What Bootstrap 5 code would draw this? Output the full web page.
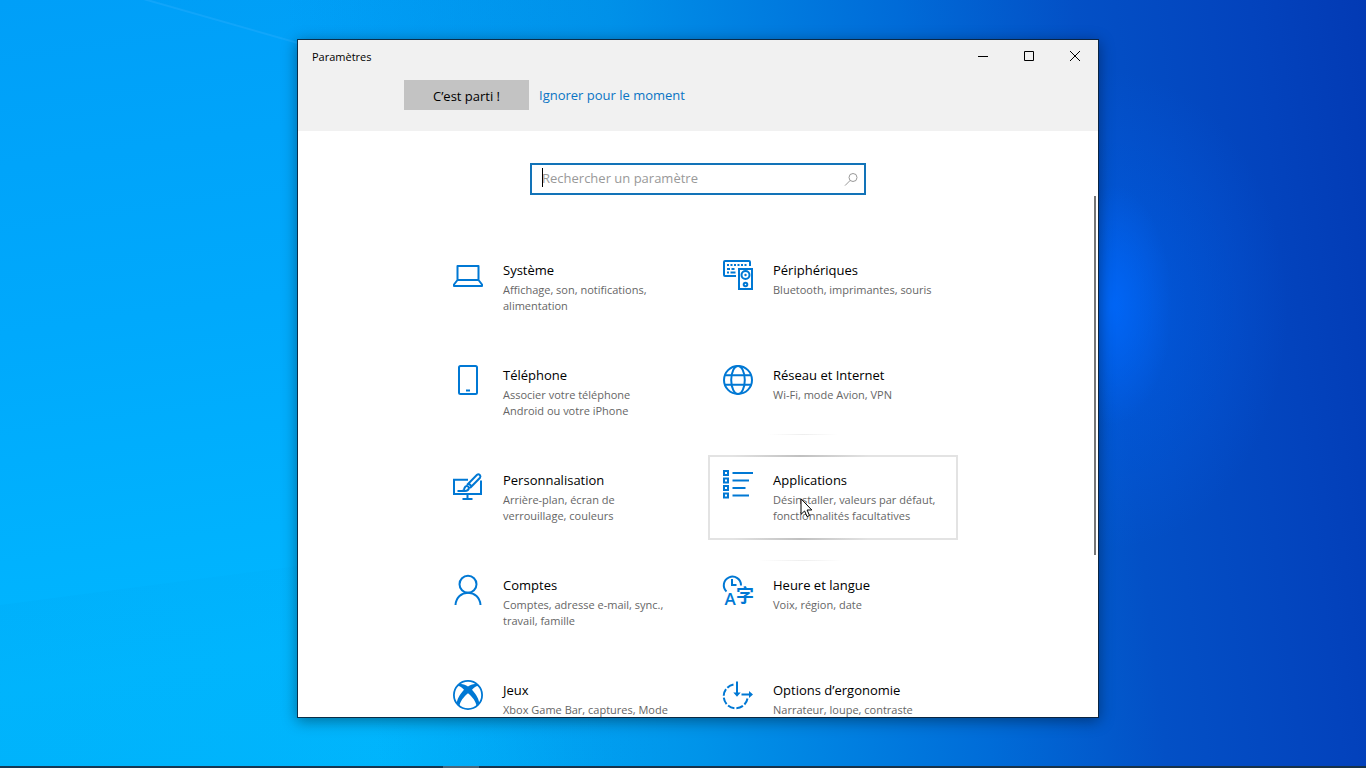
<!DOCTYPE html>
<html lang="fr">
<head>
<meta charset="utf-8">
<meta name="viewport" content="width=device-width, initial-scale=1">
<title>Paramètres</title>
<link href="https://cdn.jsdelivr.net/npm/bootstrap@5.3.0/dist/css/bootstrap.min.css" rel="stylesheet">
<style>
  :root { --accent: #0078d4; --muted-text: #666; }
  body { font-family: "Open Sans", "Noto Sans", "Noto Sans CJK SC", sans-serif; color: #000; font-size: 13px; line-height: 20px; }
  .desktop {
    background:
      radial-gradient(ellipse 60px 120px at 1112px 305px, rgba(0,106,255,.75), rgba(0,104,255,0)),
      radial-gradient(ellipse 180px 240px at 1108px 310px, rgba(0,98,240,.55), rgba(0,90,230,0)),
      linear-gradient(83deg, rgba(0,150,240,0) 26%, rgba(0,142,230,.85) 48%, rgba(0,104,214,.95) 68%, #0350c6 80%, #0343bd 92%, #033ab4 100%),
      linear-gradient(172deg, #009ff8 0%, #00a9fc 35%, #00b7ff 72%, #00b4fb 100%);
  }
  .light-rays { inset: 0; pointer-events: none; }
  .stage { padding: 39px 267px 50px 297px; min-height: 0; }
  .app-window { background: #fff; border: 1px solid rgba(10,30,50,.85); box-shadow: 0 3px 14px rgba(0,0,0,.4); min-height: 0; background-clip: padding-box; }
  .app-head { background: #f1f1f1; }
  .app-title { font-size: 11px; line-height: 16px; padding: 9px 14px 7px; }
  .win-btn { width: 46px; height: 32px; }
  .setup-bar { padding: 8px 106px 21px; gap: 10px; }
  .setup-btn { background: #c3c3c3; width: 125px; height: 30px; padding: 2px 0 0; }
  .setup-link { color: #0a74c4; }
  .scroll-zone { overflow: hidden; min-height: 0; padding-top: 32px; }
  .search-wrap { width: 336px; max-width: 90%; }
  .search-box { height: 32px; border: 2px solid #1273b8; padding: 0 34px 2px 10px; font-size: 13px; }
  .search-box::placeholder { color: #999; opacity: 1; }
  .search-icon { right: 7px; top: 9px; }
  .caret-line { left: 12px; top: 5px; width: 1px; height: 19px; background: #000; }
  .category-grid { max-width: 520px; margin-top: 50px; }
  .category-grid > .row { --bs-gutter-x: 20px; --bs-gutter-y: 20px; }
  .tile { height: 85px; padding: 15px 4px 0 15px; gap: 20px; }
  .tile svg.tile-icon { width: 30px; height: 30px; overflow: visible; fill: none; stroke: var(--accent); stroke-width: 2; }
  .tile-title { line-height: 21px; margin-bottom: 1px; }
  .tile-desc { font-size: 11px; line-height: 16px; color: var(--muted-text); }
  .tile-hover { box-shadow: inset 0 0 0 2px #e3e3e3; }
  .tile-hover::before, .tile-hover::after { content: ""; position: absolute; left: 25px; width: 135px; height: 2px; background: linear-gradient(90deg, transparent, #c0c0c0, transparent); }
  .tile-hover::before { top: 0; }
  .tile-hover::after { bottom: 0; }
  .tile-near-below { background: linear-gradient(90deg, transparent 60px, #eee 95px, transparent 130px) bottom / 100% 1px no-repeat; }
  .tile-near-above { background: linear-gradient(90deg, transparent 50px, #eee 95px, transparent 135px) top / 100% 1px no-repeat; }
  .pointer { left: 92px; top: 43px; }
  .scroll-thumb { right: 2px; top: 23%; width: 2px; height: 53%; background: #767676; }
  .taskbar-edge { height: 2px; margin-top: -2px; background: #17324a; }
  .taskbar-edge span { margin-left: 443px; width: 36px; height: 2px; background: #4a6478; }
  @media (max-width: 1100px) { .stage { padding: 24px; } .setup-bar { padding-left: 24px; padding-right: 24px; } }
</style>
</head>
<body>
<div class="desktop vh-100 d-flex flex-column overflow-hidden position-relative">
  <svg class="light-rays position-absolute w-100 h-100" aria-hidden="true">
    <defs><linearGradient id="ray"><stop offset="0" stop-color="#0090dc" stop-opacity=".08"/><stop offset="1" stop-color="#0090dc" stop-opacity="0"/></linearGradient></defs>
    <path d="M140 -2 L298 43 L700 150 L700 -2Z" fill="url(#ray)"/>
    <path d="M140 -2 L298 43" stroke="#38b4ff" stroke-opacity=".3" stroke-width="2" fill="none"/>
    <path d="M0 605 L298 566 L700 514 L700 768 L0 768Z" fill="url(#ray)"/>
  </svg>
  <main class="stage flex-fill d-flex position-relative">
    <section class="app-window position-relative w-100 d-flex flex-column" aria-label="Paramètres">
      <header class="app-head">
        <div class="d-flex justify-content-between">
          <div class="app-title">Paramètres</div>
          <div class="d-flex">
            <button type="button" class="win-btn btn p-0 border-0 rounded-0 d-flex align-items-center justify-content-center" aria-label="Réduire"><svg width="10" height="10"><path d="M0 5.5H10" stroke="#000"/></svg></button>
            <button type="button" class="win-btn btn p-0 border-0 rounded-0 d-flex align-items-center justify-content-center" aria-label="Agrandir"><svg width="10" height="10"><path d="M.5 .5H9.5V9.5H.5Z" stroke="#000" fill="none"/></svg></button>
            <button type="button" class="win-btn btn p-0 border-0 rounded-0 d-flex align-items-center justify-content-center" aria-label="Fermer"><svg width="10" height="10"><path d="M0 0L10 10M10 0L0 10" stroke="#000"/></svg></button>
          </div>
        </div>
        <div class="setup-bar d-flex align-items-center">
          <button type="button" class="setup-btn border-0">C’est parti !</button>
          <a href="#" class="setup-link text-decoration-none">Ignorer pour le moment</a>
        </div>
      </header>

      <div class="scroll-zone flex-fill">
        <form class="search-wrap mx-auto position-relative" role="search">
          <input type="text" class="search-box form-control rounded-0 shadow-none" aria-label="Rechercher un paramètre" placeholder="Rechercher un paramètre">
          <span class="caret-line position-absolute"></span>
          <svg class="search-icon position-absolute" width="15" height="15" fill="none" stroke="#999" aria-hidden="true"><circle cx="9" cy="5.5" r="4"/><path d="M6.2 8.4L1 13.6"/></svg>
        </form>

        <div class="category-grid mx-auto">
          <div class="row row-cols-2">
            <div class="col"><a href="#" class="tile d-flex text-reset text-decoration-none">
              <svg class="tile-icon flex-shrink-0" viewBox="0 0 30 30"><path d="M4.500 6H25.500V20H4.500ZM4.500 20L1 24.500V26H29V24.500L25.500 20" stroke-linejoin="round"/></svg>
              <div><div class="tile-title">Système</div><div class="tile-desc">Affichage, son, notifications,<br>alimentation</div></div></a></div>

            <div class="col"><a href="#" class="tile d-flex text-reset text-decoration-none">
              <svg class="tile-icon flex-shrink-0" viewBox="0 0 30 30"><path d="M13 16H2Q1 16 1 15V2Q1 1 2 1H26Q27 1 27 2V6"/><path d="M4 5H25" stroke-dasharray="2 1.500"/><path d="M4 9H13" stroke-dasharray="3 1.500"/><path d="M4 12.500H13" stroke-dasharray="2 1.500 5"/><path d="M16 9H29V29H16Z"/><circle cx="22.500" cy="15" r="4"/><circle cx="22.500" cy="15" r="1.200" fill="#0078d4" stroke="none"/><circle cx="22.500" cy="24.500" r="1.800"/></svg>
              <div><div class="tile-title">Périphériques</div><div class="tile-desc">Bluetooth, imprimantes, souris</div></div></a></div>

            <div class="col"><a href="#" class="tile d-flex text-reset text-decoration-none">
              <svg class="tile-icon flex-shrink-0" viewBox="0 0 30 30"><rect x="6" y="1" width="18" height="28" rx="1.500"/><path d="M13 25.500H17"/></svg>
              <div><div class="tile-title">Téléphone</div><div class="tile-desc">Associer votre téléphone<br>Android ou votre iPhone</div></div></a></div>

            <div class="col"><a href="#" class="tile tile-near-below d-flex text-reset text-decoration-none">
              <svg class="tile-icon flex-shrink-0" viewBox="0 0 30 30"><circle cx="15" cy="15" r="14"/><ellipse cx="15" cy="15" rx="6.800" ry="14"/><path d="M2 10.300H28M2 19.700H28"/></svg>
              <div><div class="tile-title">Réseau et Internet</div><div class="tile-desc">Wi-Fi, mode Avion, VPN</div></div></a></div>

            <div class="col"><a href="#" class="tile d-flex text-reset text-decoration-none">
              <svg class="tile-icon flex-shrink-0" viewBox="0 0 30 30"><path d="M15 9.700H1V24H28V10.500M14.500 24V28.500M9.500 29H19.500"/><path d="M4.500 21H12Q15.500 21 16 17.500Q14.500 15.300 12.500 16.500Q11.500 17.500 11 19.500Q10.500 21 9 21"/><path d="M14 15L24 4.800Q25.500 3.800 26.800 5Q28 6.300 27 7.800L17 18M15.800 13.500L18.500 16.200"/></svg>
              <div><div class="tile-title">Personnalisation</div><div class="tile-desc">Arrière-plan, écran de<br>verrouillage, couleurs</div></div></a></div>

            <div class="col"><a href="#" class="tile tile-hover position-relative d-flex text-reset text-decoration-none">
              <svg class="tile-icon flex-shrink-0" viewBox="0 0 30 30"><path d="M1 1H5V5H1ZM1 8.500H5V12.500H1ZM1 16H5V20H1ZM1 23.500H5V27.500H1ZM9.500 3H30M9.500 10.500H26M9.500 18H22.500M9.500 25.500H26"/></svg>
              <div><div class="tile-title">Applications</div><div class="tile-desc">Désinstaller, valeurs par défaut,<br>fonctionnalités facultatives</div></div>
              <svg class="pointer position-absolute" width="13" height="20" aria-hidden="true"><path d="M1 .800V16.300L4.600 13L7 18.600L9.500 17.500L7.100 12H11.800Z" fill="#fff" stroke="#000"/></svg></a></div>

            <div class="col"><a href="#" class="tile d-flex text-reset text-decoration-none">
              <svg class="tile-icon flex-shrink-0" viewBox="0 0 30 30"><circle cx="15" cy="9.300" r="8.500"/><path d="M2.500 30C3 22.500 8.500 17.800 15 17.800S27 22.500 27.500 30"/></svg>
              <div><div class="tile-title">Comptes</div><div class="tile-desc">Comptes, adresse e-mail, sync.,<br>travail, famille</div></div></a></div>

            <div class="col"><a href="#" class="tile tile-near-above d-flex text-reset text-decoration-none">
              <svg class="tile-icon flex-shrink-0" viewBox="0 0 30 30"><path d="M3.500 16.500A8.600 8.600 0 1 1 18 10.500M9 4V10H13.500"/><g fill="#0078d4" stroke="none"><text x="1.500" y="30" font-family="Open Sans, sans-serif" font-size="17" font-weight="600">A</text><text x="13" y="27" font-family="Noto Sans CJK SC, sans-serif" font-size="18" font-weight="700">字</text></g></svg>
              <div><div class="tile-title">Heure et langue</div><div class="tile-desc">Voix, région, date</div></div></a></div>

            <div class="col"><a href="#" class="tile d-flex text-reset text-decoration-none">
              <svg class="tile-icon flex-shrink-0" viewBox="0 0 30 30"><circle cx="15" cy="15" r="14.100" stroke-width="1.800"/><path d="M5.500 4.500C9 3.200 12 4.800 15 6.500C18 4.800 21 3.200 24.500 4.500L25.500 6C23.500 5.500 20.500 8 19 9.800C23 14 26.500 20 26.200 24L23.500 26.500C23.500 22 19 16.500 15 13.300C11 16.500 6.500 22 6.500 26.500L3.800 24C3.500 20 7 14 11 9.800C9.500 8 6.500 5.500 4.500 6Z" fill="#0078d4" stroke="none"/></svg>
              <div><div class="tile-title">Jeux</div><div class="tile-desc">Xbox Game Bar, captures, Mode</div></div></a></div>

            <div class="col"><a href="#" class="tile d-flex text-reset text-decoration-none">
              <svg class="tile-icon flex-shrink-0" viewBox="0 0 30 30"><path d="M10.500 4.500A12 12 0 1 0 24.500 18.500" stroke-dasharray="7 2"/><path d="M14 1.500V14M18.500 14.500H27"/><path d="M10.300 12.500H17.700L14 16.800ZM26 11V18L30 14.500Z" fill="#0078d4" stroke="none"/></svg>
              <div><div class="tile-title">Options d’ergonomie</div><div class="tile-desc">Narrateur, loupe, contraste</div></div></a></div>
          </div>
        </div>
      </div>
      <span class="scroll-thumb position-absolute"></span>
    </section>
  </main>
  <footer class="taskbar-edge d-flex flex-shrink-0"><span></span></footer>
</div>
<script src="https://cdn.jsdelivr.net/npm/bootstrap@5.3.0/dist/js/bootstrap.bundle.min.js"></script>
</body>
</html>
